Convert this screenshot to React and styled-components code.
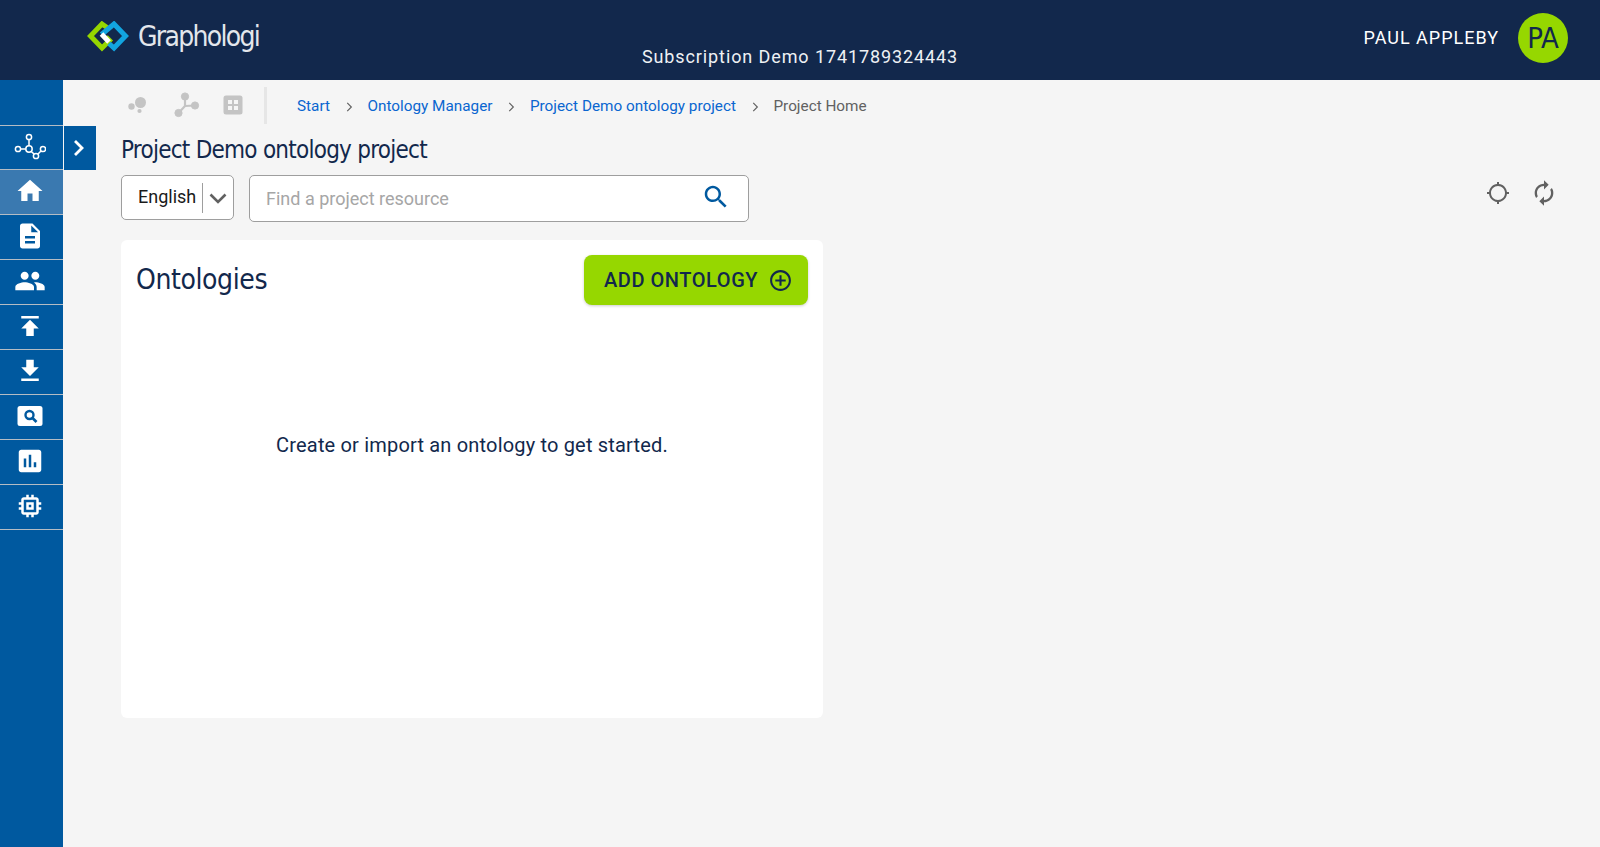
import { Fragment } from "react";

import styled, { createGlobalStyle } from "styled-components";

const GlobalStyle = createGlobalStyle`
  html, body { margin: 0; padding: 0; height: 100%; }
  body { background: #f5f5f5; font-family: Roboto, "Liberation Sans", sans-serif; }
  #root { height: 100%; }
`;

const headingFont = `"Liberation Sans Narrow", "DejaVu Sans Condensed", Roboto, sans-serif`;

const ICONS = {
  home: "M10 20v-6h4v6h5v-8h3L12 3 2 12h3v8z",
  doc: "M14 2H6c-1.1 0-1.99.9-1.99 2L4 20c0 1.1.89 2 1.99 2H18c1.1 0 2-.9 2-2V8l-6-6zm2 16H8v-2h8v2zm0-4H8v-2h8v2zm-3-5V3.5L18.5 9H13z",
  people: "M16 11c1.66 0 2.99-1.34 2.99-3S17.66 5 16 5c-1.66 0-3 1.34-3 3s1.34 3 3 3zm-8 0c1.66 0 2.99-1.34 2.99-3S9.66 5 8 5C6.34 5 5 6.34 5 8s1.34 3 3 3zm0 2c-2.33 0-7 1.17-7 3.5V19h14v-2.5c0-2.33-4.67-3.5-7-3.5zm8 0c-.29 0-.62.02-.97.05 1.16.84 1.97 1.97 1.97 3.45V19h6v-2.5c0-2.33-4.67-3.5-7-3.5z",
  publish: "M5 4v2h14V4H5zm0 10h4v6h6v-6h4l-7-7-7 7z",
  download: "M19 9h-4V3H9v6H5l7 7 7-7zM5 18v2h14v-2H5z",
  chart: "M19 3H5c-1.1 0-2 .9-2 2v14c0 1.1.9 2 2 2h14c1.1 0 2-.9 2-2V5c0-1.1-.9-2-2-2zM9 17H7v-7h2v7zm4 0h-2V7h2v10zm4 0h-2v-4h2v4z",
  chip: "M15 9H9v6h6V9zm-2 4h-2v-2h2v2zm8-2V9h-2V7c0-1.1-.9-2-2-2h-2V3h-2v2h-2V3H9v2H7c-1.1 0-2 .9-2 2v2H3v2h2v2H3v2h2v2c0 1.1.9 2 2 2h2v2h2v-2h2v2h2v-2h2c1.1 0 2-.9 2-2v-2h2v-2h-2v-2h2zm-4 6H7V7h10v10z",
  search: "M15.5 14h-.79l-.28-.27C15.41 12.59 16 11.11 16 9.5 16 5.91 13.09 3 9.5 3S3 5.91 3 9.5 5.91 16 9.5 16c1.61 0 3.09-.59 4.23-1.57l.27.28v.79l5 4.99L20.49 19l-4.99-5zm-6 0C7.01 14 5 11.99 5 9.5S7.01 5 9.5 5 14 7.01 14 9.5 11.99 14 9.5 14z",
  addCircle: "M13 7h-2v4H7v2h4v4h2v-4h4v-2h-4V7zm-1-5C6.48 2 2 6.48 2 12s4.48 10 10 10 10-4.48 10-10S17.52 2 12 2zm0 18c-4.41 0-8-3.59-8-8s3.59-8 8-8 8 3.59 8 8-3.59 8-8 8z",
  target: "M20.94 11c-.46-4.17-3.77-7.48-7.94-7.94V1h-2v2.06C6.83 3.52 3.52 6.83 3.06 11H1v2h2.06c.46 4.17 3.77 7.48 7.94 7.94V23h2v-2.06c4.17-.46 7.48-3.77 7.94-7.94H23v-2h-2.06zM12 19c-3.87 0-7-3.13-7-7s3.13-7 7-7 7 3.13 7 7-3.13 7-7 7z",
  renew: "M12 6v3l4-4-4-4v3c-4.42 0-8 3.58-8 8 0 1.57.46 3.03 1.24 4.26L6.7 14.8c-.45-.83-.7-1.79-.7-2.8 0-3.31 2.69-6 6-6zm6.76 1.74L17.3 9.2c.44.84.7 1.79.7 2.8 0 3.31-2.69 6-6 6v-3l-4 4 4 4v-3c4.42 0 8-3.58 8-8 0-1.57-.46-3.03-1.24-4.26z",
};

const Icon = ({ name, size = 24, color = "currentColor" }) => (
  <svg width={size} height={size} viewBox="0 0 24 24" fill={color}>
    <path d={ICONS[name]} />
  </svg>
);

const Logo = () => (
  <svg width="42" height="32" viewBox="0 0 42 32" fill="none" strokeWidth="5">
    <path d="M20 6.5 L15 3 L3.5 15 L15 27 L22.5 19.5 L19 16" stroke="#96d700" />
    <path d="M14.5 13.5 L27 3 L38.5 15 L27 27 L22 22.5" stroke="#12a5e0" />
    <path d="M14.5 13 L22 21" stroke="#fff" />
  </svg>
);

const GraphIcon = () => (
  <svg width="32" height="28" viewBox="0 0 32 28" fill="none" stroke="#fff" strokeWidth="1.5">
    <circle cx="15" cy="4" r="2.6" />
    <circle cx="15" cy="16" r="3.2" />
    <circle cx="4" cy="16" r="2.6" />
    <circle cx="22" cy="23" r="2.6" />
    <circle cx="29" cy="16" r="2.6" />
    <path d="M15 6.6V12.8M6.6 16H11.8M17.2 18.5l3 2.6M23.8 21.2l3.4-3.4" />
  </svg>
);

const DotsIcon = () => (
  <svg width="23" height="18" viewBox="0 0 23 18" fill="#c4c4c4">
    <circle cx="12.5" cy="6.5" r="5.5" />
    <circle cx="3.5" cy="10.5" r="3.2" />
    <circle cx="11.5" cy="15" r="2.1" />
  </svg>
);

const BranchIcon = () => (
  <svg width="26" height="26" viewBox="0 0 26 26" fill="#c4c4c4" stroke="#c4c4c4">
    <circle cx="11" cy="4.5" r="3.6" />
    <circle cx="21" cy="13.5" r="3.6" />
    <circle cx="4.5" cy="21" r="3.6" />
    <path d="M11 5v9.5M11 14L5 20.5M11 14l10-.5" fill="none" strokeWidth="2.2" />
  </svg>
);

const GridIcon = () => (
  <svg width="20" height="20" viewBox="0 0 20 20">
    <rect x="0.5" y="0.5" width="19" height="19" rx="2.5" fill="#c4c4c4" />
    <path d="M5 5h4v4H5zM11 5h4v4h-4zM5 11h4v4H5zM11 11h4v4h-4z" fill="#f5f5f5" />
  </svg>
);

const PreviewIcon = () => (
  <svg width="26" height="22" viewBox="0 0 26 22">
    <rect x="0.5" y="1" width="25" height="20" rx="2.5" fill="#fff" />
    <circle cx="12.5" cy="10" r="4" fill="none" stroke="#00599f" strokeWidth="2.4" />
    <path d="M15.5 13l4 4" stroke="#00599f" strokeWidth="2.6" />
  </svg>
);

const Page = styled.div`
  display: flex;
  flex-direction: column;
  height: 847px;
  overflow: hidden;
`;

const Header = styled.header`
  flex: 0 0 80px;
  display: grid;
  grid-template-columns: 1fr auto 1fr;
  background: #12284c;
  color: #fff;
`;

const Brand = styled.div`
  display: flex;
  align-items: center;
  gap: 9px;
  padding: 0 0 7px 87px;
`;

const BrandName = styled.span`
  font-family: ${headingFont};
  font-size: 28px;
  letter-spacing: -1.7px;
  color: #e3e7ec;
`;

const Subscription = styled.div`
  align-self: end;
  padding-bottom: 13px;
  font-size: 18px;
  letter-spacing: 0.9px;
  color: #eef1f4;
`;

const User = styled.div`
  display: flex;
  justify-content: flex-end;
  align-items: center;
  gap: 19px;
  padding: 0 32px 5px 0;
`;

const UserName = styled.span`
  font-size: 18px;
  font-weight: 400;
  letter-spacing: 1px;
`;

const Avatar = styled.div`
  width: 50px;
  height: 50px;
  border-radius: 50%;
  background: #96d700;
  color: #12284c;
  display: flex;
  align-items: center;
  justify-content: center;
  font-family: ${headingFont};
  font-size: 29px;
`;

const Body = styled.div`
  flex: 1;
  display: flex;
  position: relative;
`;

const Sidebar = styled.nav`
  flex: 0 0 63px;
  box-sizing: border-box;
  background: #00599f;
  padding-top: 45px;
`;

const NavItem = styled.div`
  box-sizing: border-box;
  height: 45px;
  padding: 0 4px 2px 0;
  border-top: 1px solid #b4bcc4;
  display: flex;
  align-items: center;
  justify-content: center;
  background: ${(p) => (p.$active ? "#3a79b0" : "transparent")};
  &:first-child { height: 44px; }
  &:last-child { height: 46px; border-bottom: 1px solid #b4bcc4; }
`;

const Expand = styled.button`
  position: absolute;
  left: 64px;
  top: 46px;
  width: 32px;
  height: 44px;
  padding: 0 4px 0 0;
  border: 0;
  background: #00599f;
  display: flex;
  align-items: center;
  justify-content: center;
`;

const Main = styled.main`
  flex: 1;
  padding: 0 42px 0 58px;
`;

const Crumbs = styled.div`
  display: flex;
  align-items: center;
  height: 51px;
`;

const Tools = styled.div`
  display: flex;
  align-items: center;
  gap: 23px;
  padding: 0 21px 2px 7px;
  margin-right: 30px;
  height: 35px;
  border-right: 3px solid #e6e6e6;
`;

const Crumb = styled.span`
  font-size: 15.3px;
  color: ${(p) => (p.$current ? "#616161" : "#0a66d0")};
`;

const Sep = styled.span`
  display: flex;
  width: 37.5px;
  justify-content: center;
  padding-top: 3px;
`;

const Title = styled.h1`
  margin: 0;
  height: 35px;
  font-family: ${headingFont};
  font-size: 24px;
  line-height: 39px;
  letter-spacing: -0.75px;
  font-weight: 400;
  color: #12284c;
`;

const Controls = styled.div`
  display: flex;
  align-items: flex-start;
  margin-top: 9px;
`;

const LangSelect = styled.div`
  box-sizing: border-box;
  width: 113px;
  height: 45px;
  display: flex;
  align-items: center;
  padding: 0 0 2px 16px;
  background: #fff;
  border: 1px solid #9e9e9e;
  border-radius: 5px;
  font-size: 18px;
  color: #1a1a1a;
`;

const SelectArrow = styled.span`
  display: flex;
  align-items: center;
  justify-content: center;
  margin: 2px 1px 0 6px;
  flex: 1;
  height: 30px;
  border-left: 1px solid #9e9e9e;
`;

const SearchBox = styled.div`
  box-sizing: border-box;
  width: 500px;
  height: 47px;
  margin-left: 15px;
  padding: 0 17px 0 16px;
  display: flex;
  align-items: center;
  justify-content: space-between;
  background: #fff;
  border: 1px solid #9e9e9e;
  border-radius: 5px;
  font-size: 18px;
  color: #a6a6a6;
`;

const SearchAdorn = styled.span`
  display: flex;
  margin-bottom: 3px;
`;

const Actions = styled.div`
  margin-left: auto;
  display: flex;
  align-items: center;
  gap: 20px;
  padding: 4px 0 0;
`;

const Card = styled.section`
  box-sizing: border-box;
  width: 702px;
  height: 478px;
  margin-top: 18px;
  padding: 15px 15px 0;
  background: #fff;
  border-radius: 6px;
`;

const CardHead = styled.div`
  display: flex;
  align-items: center;
  justify-content: space-between;
`;

const CardTitle = styled.h2`
  margin: 0 0 2px;
  font-family: ${headingFont};
  font-size: 28px;
  letter-spacing: -0.4px;
  font-weight: 400;
  color: #12284c;
`;

const AddButton = styled.button`
  width: 224px;
  height: 50px;
  padding: 0 15px 0 20px;
  border: 0;
  border-radius: 8px;
  background: #96d700;
  box-shadow: 0 1px 3px rgba(0, 0, 0, 0.2);
  display: flex;
  align-items: center;
  justify-content: space-between;
  font-family: Roboto, sans-serif;
  font-size: 20px;
  font-weight: 500;
  letter-spacing: 0.55px;
  color: #12284c;
`;

const Empty = styled.p`
  margin: 128px 0 0;
  text-align: center;
  font-size: 20px;
  letter-spacing: 0.18px;
  color: #12284c;
`;

const Chevron = ({ size, color, width = 2 }) => (
  <svg width={size} height={size} viewBox="0 0 24 24" fill="none" stroke={color} strokeWidth={width}>
    <path d="M9 5l7 7-7 7" />
  </svg>
);

const crumbs = ["Start", "Ontology Manager", "Project Demo ontology project"];

const navItems = [
  { key: "graph", el: <GraphIcon /> },
  { key: "home", el: <Icon name="home" size={30} color="#fff" />, active: true },
  { key: "doc", el: <Icon name="doc" size={30} color="#fff" /> },
  { key: "people", el: <Icon name="people" size={32} color="#fff" /> },
  { key: "publish", el: <Icon name="publish" size={30} color="#fff" /> },
  { key: "download", el: <Icon name="download" size={30} color="#fff" /> },
  { key: "preview", el: <PreviewIcon /> },
  { key: "chart", el: <Icon name="chart" size={30} color="#fff" /> },
  { key: "chip", el: <Icon name="chip" size={30} color="#fff" /> },
];

const App = () => {
  return (
    <Page>
      <GlobalStyle />
      <Header>
        <Brand>
          <Logo />
          <BrandName>Graphologi</BrandName>
        </Brand>
        <Subscription>Subscription Demo 1741789324443</Subscription>
        <User>
          <UserName>PAUL APPLEBY</UserName>
          <Avatar>PA</Avatar>
        </User>
      </Header>
      <Body>
        <Sidebar>
          {navItems.map((item) => (
            <NavItem key={item.key} $active={item.active}>
              {item.el}
            </NavItem>
          ))}
        </Sidebar>
        <Expand>
          <Chevron size={24} color="#fff" width={2.8} />
        </Expand>
        <Main>
          <Crumbs>
            <Tools>
              <DotsIcon />
              <BranchIcon />
              <GridIcon />
            </Tools>
            {crumbs.map((c) => (
              <Fragment key={c}>
                <Crumb>{c}</Crumb>
                <Sep>
                  <Chevron size={14} color="#616161" />
                </Sep>
              </Fragment>
            ))}
            <Crumb $current>Project Home</Crumb>
          </Crumbs>
          <Title>Project Demo ontology project</Title>
          <Controls>
            <LangSelect>
              English
              <SelectArrow>
                <svg width="18" height="18" viewBox="0 0 18 18" fill="none" stroke="#616161" strokeWidth="2.6">
                  <path d="M1.5 5.5l7.5 7.5 7.5-7.5" />
                </svg>
              </SelectArrow>
            </LangSelect>
            <SearchBox>
              Find a project resource
              <SearchAdorn>
                <Icon name="search" size={30} color="#00599f" />
              </SearchAdorn>
            </SearchBox>
            <Actions>
              <Icon name="target" color="#616161" />
              <Icon name="renew" size={28} color="#616161" />
            </Actions>
          </Controls>
          <Card>
            <CardHead>
              <CardTitle>Ontologies</CardTitle>
              <AddButton>
                ADD ONTOLOGY
                <Icon name="addCircle" size={25} color="#12284c" />
              </AddButton>
            </CardHead>
            <Empty>Create or import an ontology to get started.</Empty>
          </Card>
        </Main>
      </Body>
    </Page>
  );
};

export default App;
